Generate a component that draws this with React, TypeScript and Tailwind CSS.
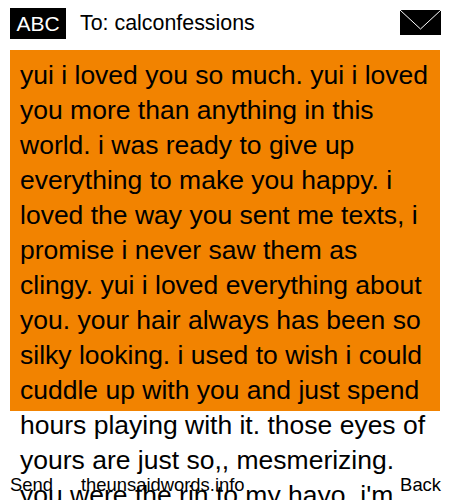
const message =
  "yui i loved you so much. yui i loved you more than anything in this world. i was ready to give up everything to make you happy. i loved the way you sent me texts, i promise i never saw them as clingy. yui i loved everything about you. your hair always has been so silky looking. i used to wish i could cuddle up with you and just spend hours playing with it. those eyes of yours are just so,, mesmerizing. you were the rin to my hayo, i'm";

export default function App() {
  return (
    <main className="relative h-[500px] w-[450px] overflow-hidden bg-white font-['Liberation_Sans',sans-serif] text-black">
      <header className="flex h-[50px] items-start justify-between pl-[10px] pr-[9px] pt-[8px]">
        <div className="flex items-center gap-[14px]">
          <span className="flex h-[31px] w-[56px] items-center justify-center bg-black text-[21px] text-white">ABC</span>
          <span className="text-[21.4px] leading-[31px]">To: calconfessions</span>
        </div>
        <svg className="mt-[2px] block" width="41" height="25" viewBox="0 0 41 25" shapeRendering="crispEdges">
          <rect width="41" height="25" fill="#000" />
          <path d="M0 0 L20.5 19 L41 0" fill="none" stroke="#fff" strokeWidth="1" shapeRendering="auto" />
        </svg>
      </header>

      <section className="mx-[10px] h-[361px] bg-[#f28300] px-[10px] pt-[8px]">
        <p className="w-[415px] text-[26.5px] leading-[35px]">{message}</p>
      </section>

      <footer className="absolute bottom-[3px] left-[10px] right-[9px] flex items-center justify-between text-[18.4px] leading-[24px]">
        <div className="flex gap-[28px]">
          <span>Send</span>
          <span>theunsaidwords.info</span>
        </div>
        <span>Back</span>
      </footer>
    </main>
  );
}
